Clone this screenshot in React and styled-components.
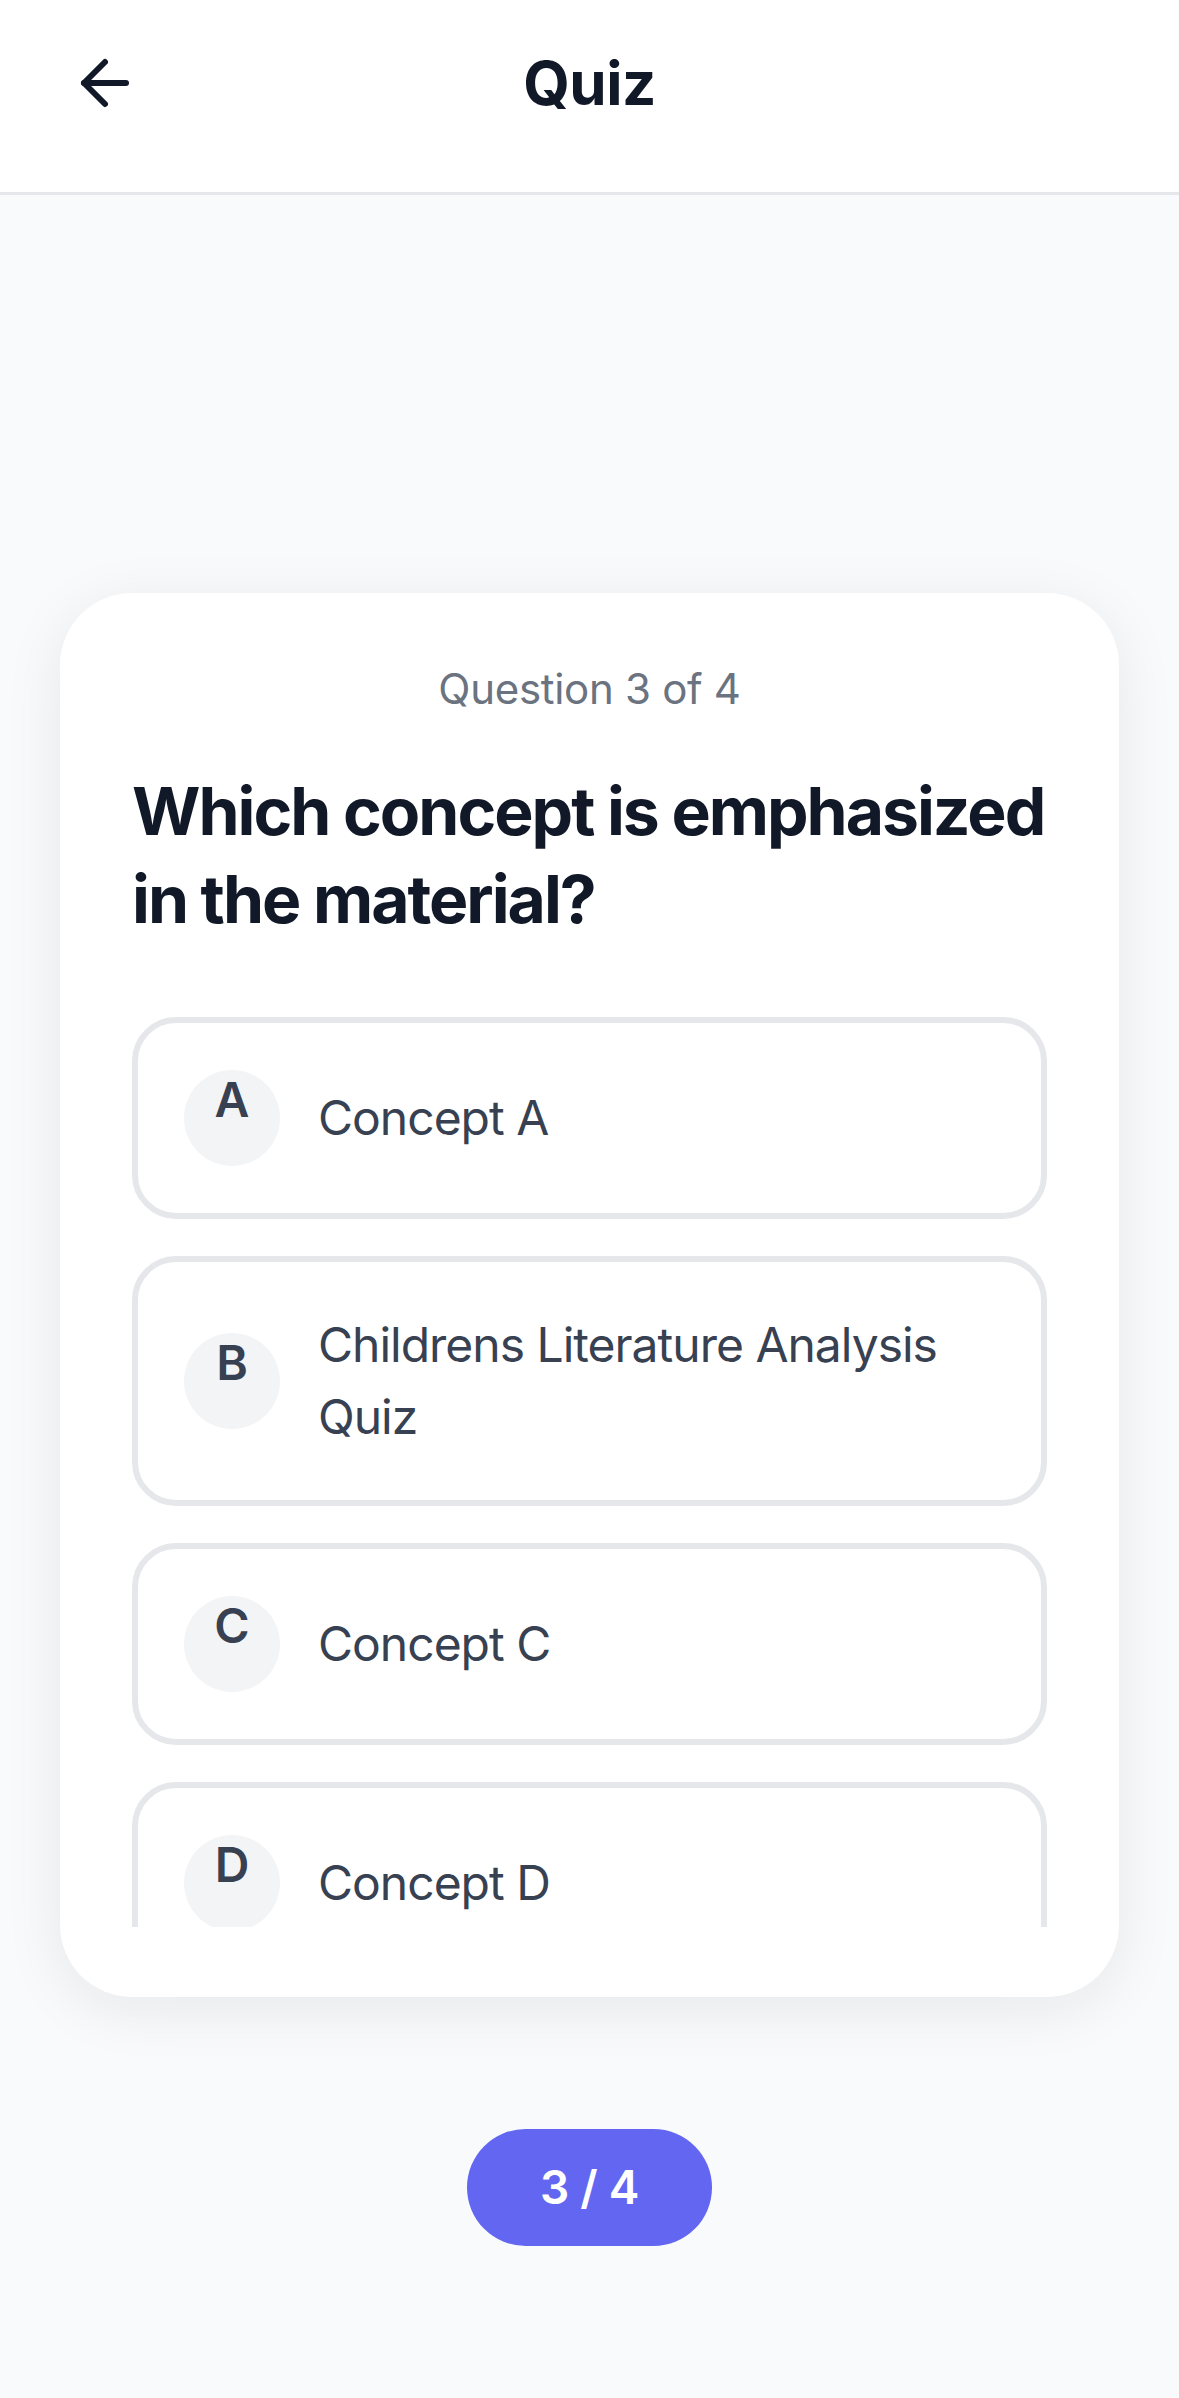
import React from 'react'
import styled, { createGlobalStyle } from 'styled-components'
import { ArrowLeft } from 'lucide-react'

const GlobalStyle = createGlobalStyle`
    * {
        box-sizing: border-box;
    }

    html, body {
        margin: 0;
        padding: 0;
        background: #f9fafb;
        font-family: Inter, "Noto Sans", "Liberation Sans", sans-serif;
    }
`;

const Page = styled.div`
    min-height: 100vh;
    display: flex;
    flex-direction: column;
    background: #f9fafb;
`;

const Header = styled.header`
    display: grid;
    grid-template-columns: 72px 1fr 72px;
    align-items: center;
    padding: 47px 69px 73px;
    background: #fff;
    border-bottom: 3px solid #e5e7eb;
`;

const BackButton = styled.button`
    display: flex;
    align-items: center;
    justify-content: center;
    width: 72px;
    height: 72px;
    padding: 0;
    border: none;
    background: none;
    color: #111827;
    cursor: pointer;
`;

const Title = styled.h1`
    margin: 0;
    text-align: center;
    font-size: 60px;
    line-height: 72px;
    font-weight: 700;
    color: #111827;
    letter-spacing: -0.5px;
`;

const Main = styled.main`
    padding: 398px 60px 132px;
`;

const Card = styled.section`
    height: 1404px;
    padding: 70px 72px;
    background: #fff;
    border-radius: 72px;
    box-shadow: 0 12px 60px rgba(17, 24, 39, 0.08);
`;

const CardBody = styled.div`
    height: 100%;
    display: flex;
    flex-direction: column;
    overflow: hidden;
`;

const Counter = styled.p`
    margin: 0 0 52px;
    text-align: center;
    font-size: 42px;
    line-height: 52px;
    color: #6b7280;
    letter-spacing: -0.3px;
`;

const Question = styled.h2`
    margin: 0 0 74px;
    font-size: 66px;
    line-height: 88px;
    font-weight: 700;
    color: #111827;
    letter-spacing: -2px;
`;

const Options = styled.div`
    display: flex;
    flex-direction: column;
    gap: 37px;
`;

const Option = styled.button`
    display: flex;
    align-items: center;
    gap: 38px;
    width: 100%;
    padding: 47px 46px;
    border: 6px solid #e5e7eb;
    border-radius: 44px;
    background: #fff;
    text-align: left;
    font-family: inherit;
    cursor: pointer;
`;

const Letter = styled.span`
    flex-shrink: 0;
    width: 96px;
    height: 96px;
    border-radius: 50%;
    background: #f3f4f6;
    text-align: center;
    font-size: 48px;
    font-weight: 600;
    color: #374151;
`;

const OptionText = styled.span`
    font-size: 48px;
    line-height: 72px;
    color: #374151;
    letter-spacing: -1px;
`;

const Footer = styled.footer`
    display: flex;
    justify-content: center;
    padding-bottom: 152px;
`;

const Progress = styled.div`
    padding: 22px 73px;
    border-radius: 999px;
    background: #6366f1;
    color: #fff;
    font-size: 46px;
    line-height: 73px;
    font-weight: 600;
    letter-spacing: -0.3px;
`;

const options = [
    { key: 'A', text: 'Concept A' },
    { key: 'B', text: 'Childrens Literature Analysis Quiz' },
    { key: 'C', text: 'Concept C' },
    { key: 'D', text: 'Concept D' },
];

const App = () => {
    return (
        <Page>
            <GlobalStyle />
            <Header>
                <BackButton aria-label="Back">
                    <ArrowLeft size={72} strokeWidth={2} />
                </BackButton>
                <Title>Quiz</Title>
                <div />
            </Header>
            <Main>
                <Card>
                    <CardBody>
                        <Counter>Question 3 of 4</Counter>
                        <Question>Which concept is emphasized in the material?</Question>
                        <Options>
                            {options.map(o => (
                                <Option key={o.key}>
                                    <Letter>{o.key}</Letter>
                                    <OptionText>{o.text}</OptionText>
                                </Option>
                            ))}
                        </Options>
                    </CardBody>
                </Card>
            </Main>
            <Footer>
                <Progress>3 / 4</Progress>
            </Footer>
        </Page>
    )
}

export default App
